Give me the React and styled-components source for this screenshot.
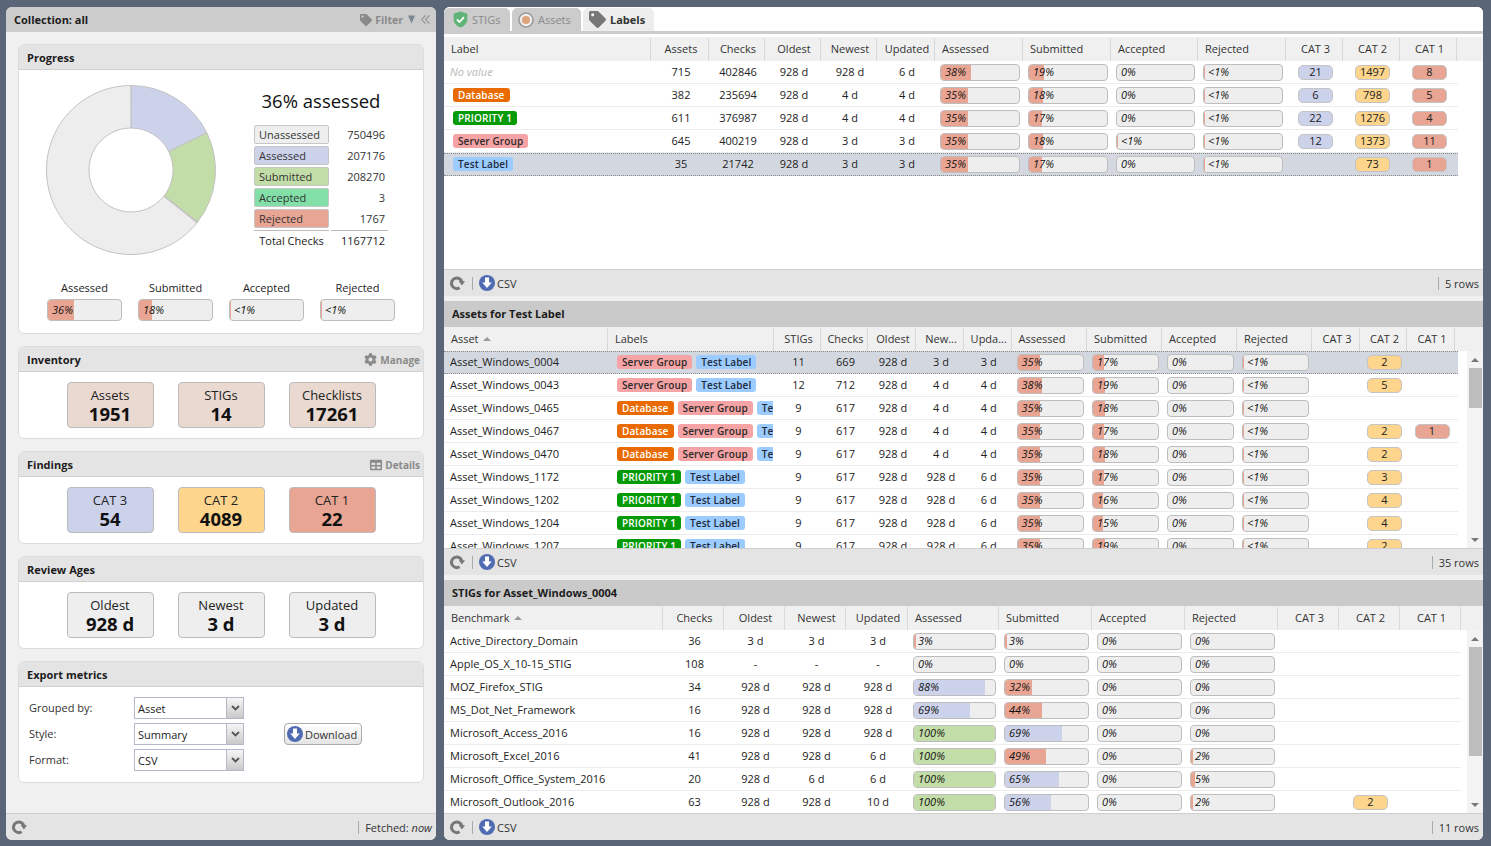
import React from 'react';
import styled, { createGlobalStyle } from 'styled-components';
import { FaTag, FaCog, FaTable } from 'react-icons/fa';

const GlobalStyle = createGlobalStyle`
  html, body {
    margin: 0;
    height: 100%;
    overflow: hidden;
    background: #5a6677;
    font-family: "Open Sans", "Liberation Sans", sans-serif;
    font-size: 11px;
    color: #1c1c1c;
  }
  * { box-sizing: border-box; }
`;

const fills = { low: '#e9a594', mid: '#cdd2eb', full: '#c3dda8' };

const Page = styled.div`
  display: flex;
  gap: 8px;
  width: 1491px;
  height: 846px;
  padding: 7px 8px 6px 6px;
`;

const LeftPanel = styled.aside`
  width: 430px;
  display: flex;
  flex-direction: column;
  background: #f0f0f0;
  border-radius: 6px;
  overflow: hidden;
`;

const LeftTitle = styled.header`
  height: 25px;
  flex: none;
  display: flex;
  align-items: center;
  padding: 0 6px 0 8px;
  background: #cccccc;
  font-weight: 700;
`;

const Grow = styled.span`
  flex: 1;
`;

const GrayAction = styled.span`
  display: flex;
  align-items: center;
  gap: 3px;
  margin-top: ${p => p.$top || 0}px;
  color: #8a8a8a;
  font-weight: 700;
  font-size: ${p => p.$size || 10}px;
`;

const ProgressBody = styled.div`
  padding: 15px 0 0 27px;
`;

const Fieldset = styled.section`
  height: ${p => p.$h}px;
  flex: none;
  display: flex;
  flex-direction: column;
  background: #fff;
  border: 1px solid #dcdcdc;
  border-radius: 6px;
  overflow: hidden;
`;

const FieldsetTitle = styled.div`
  height: 25px;
  flex: none;
  display: flex;
  align-items: center;
  padding: 0 3px 0 8px;
  background: #e4e4e4;
  border-bottom: 1px solid #d0d0d0;
  font-weight: 700;
`;

const LeftBody = styled.div`
  flex: 1;
  display: flex;
  flex-direction: column;
  gap: 12px;
  padding: 12px 12px 0;
`;

const ProgressTop = styled.div`
  display: flex;
  gap: 38px;
`;

const LegendBox = styled.div`
  width: 134px;
  padding-top: 4px;
`;

const Heading = styled.div`
  font-size: 18.500px;
  line-height: 24px;
  text-align: center;
  white-space: nowrap;
  margin-bottom: 12px;
  color: #111;
`;

const LegendGrid = styled.div`
  display: grid;
  grid-template-columns: 75px 57px;
  column-gap: 2px;
  row-gap: 2px;
`;

const LegendItem = styled.div`
  height: 19px;
  line-height: 18px;
  padding-left: 4px;
  background: ${p => p.$bg};
  border: 1px solid #c6c6c6;
  border-radius: 2px;
  color: #333;
`;

const LegendValue = styled.div`
  line-height: 19px;
  text-align: right;
  padding-right: 3px;
  color: #333;
`;

const TotalLabel = styled.div`
  border-top: 1px solid #bbb;
  height: 22px;
  line-height: 20px;
  text-align: center;
  white-space: nowrap;
`;

const TotalValue = styled(TotalLabel)`
  text-align: right;
  padding-right: 3px;
`;

const MiniBars = styled.div`
  display: grid;
  grid-template-columns: repeat(4, 75px);
  column-gap: 16px;
  margin: 25px 0 0 1px;
`;

const MiniLabel = styled.div`
  line-height: 15px;
  margin-bottom: 4px;
  text-align: center;
  font-size: 11px;
`;

const BarWrap = styled.div`
  position: relative;
  height: ${p => p.$h || 17}px;
  background: #eeeeee;
  border: 1px solid #bdbdbd;
  border-radius: 4px;
  overflow: hidden;
`;

const BarFill = styled.div`
  height: 100%;
  background: ${p => fills[p.$kind]};
`;

const BarText = styled.span`
  position: absolute;
  top: 0;
  bottom: 1px;
  left: 4px;
  display: flex;
  align-items: center;
  font-style: italic;
  color: #111;
`;

const TileRow = styled.div`
  flex: 1;
  display: flex;
  justify-content: center;
  align-items: center;
  gap: 24px;
`;

const Tile = styled.div`
  width: 87px;
  height: 46px;
  padding-top: 1px;
  display: flex;
  flex-direction: column;
  align-items: center;
  justify-content: center;
  background: ${p => p.$bg};
  border: 1px solid #bbb;
  border-radius: 4px;
`;

const TileLabel = styled.div`
  font-size: 13px;
  line-height: 17px;
  color: #222;
`;

const TileValue = styled.div`
  font-size: 18.500px;
  line-height: 20px;
  font-weight: 700;
  color: #111;
`;

const ExportBody = styled.div`
  flex: 1;
  display: flex;
  align-items: flex-start;
  padding: 10px 10px 0;
`;

const ExportForm = styled.div`
  display: grid;
  grid-template-columns: 105px 110px;
  row-gap: 4px;
  align-items: center;
`;

const ExportLabel = styled.div`
  margin-top: -1px;
  color: #333;
`;

const Select = styled.div`
  height: 22px;
  display: flex;
  background: #fff;
  border: 1px solid #b5b8c8;
`;

const SelectValue = styled.div`
  flex: 1;
  padding-left: 3px;
  line-height: 22px;
`;

const SelectTrigger = styled.div`
  width: 17px;
  display: flex;
  align-items: center;
  justify-content: center;
  background: linear-gradient(#f6f6f6, #c9c9c9);
  border-left: 1px solid #b5b8c8;
`;

const DownloadButton = styled.div`
  width: 78px;
  height: 22px;
  margin: 26px 0 0 40px;
  display: flex;
  align-items: center;
  gap: 2px;
  padding-left: 2px;
  background: linear-gradient(#ffffff, #e4e4e4);
  border: 1px solid #aaa;
  border-radius: 4px;
  color: #333;
`;

const Footer = styled.footer`
  height: 27px;
  flex: none;
  display: flex;
  align-items: center;
  padding: 0 4px 0 5px;
  background: #e4e4e4;
  border-top: 1px solid #cfcfcf;
  color: #333;
`;

const Divider = styled.span`
  width: 1px;
  height: 13px;
  background: #aaa;
  margin: 0 6px 0 7px;
`;

const CsvText = styled.span`
  margin-left: 2px;
`;

const RightColumn = styled.main`
  flex: 1;
  display: flex;
  flex-direction: column;
  gap: 5px;
  background: #f0f0f0;
  border-radius: 6px;
  overflow: hidden;
`;

const GridPanel = styled.div`
  height: ${p => (p.$h ? `${p.$h}px` : 'auto')};
  flex: ${p => (p.$h ? 'none' : 1)};
  min-height: 0;
  display: flex;
  flex-direction: column;
  background: #fff;
`;

const TabStrip = styled.div`
  height: 27px;
  flex: none;
  display: flex;
  gap: 2px;
  padding-top: 1px;
  background: #fff;
  border-bottom: 3px solid #cccccc;
  margin-bottom: 3px;
`;

const Tab = styled.div`
  width: ${p => p.$w}px;
  height: 23px;
  display: flex;
  align-items: center;
  gap: 4px;
  padding-left: ${p => p.$pl}px;
  background: ${p => (p.$active ? '#ededed' : '#cccccc')};
  border-radius: 5px 5px 0 0;
  color: ${p => (p.$active ? '#333' : '#8a8a8a')};
  font-weight: ${p => (p.$active ? 700 : 400)};
`;

const PanelTitle = styled.div`
  height: 26px;
  flex: none;
  display: flex;
  align-items: center;
  padding: 0 0 2px 8px;
  background: #cacaca;
  font-weight: 700;
`;

const HeaderRow = styled.div`
  height: 24px;
  flex: none;
  display: grid;
  grid-template-columns: ${p => p.$cols};
  background: #f0f0f0;
`;

const HeaderCell = styled.div`
  display: flex;
  align-items: center;
  justify-content: ${p => (p.$center ? 'center' : 'flex-start')};
  gap: 4px;
  padding: 0 ${p => (p.$center ? 0 : 6)}px 2px ${p => (p.$center ? 3 : 7)}px;
  margin-top: 1px;
  border-right: 1px solid #d8d8d8;
  white-space: nowrap;
  color: #333;
`;

const SortArrow = styled.span`
  width: 0;
  height: 0;
  margin-top: 1px;
  border-left: 4px solid transparent;
  border-right: 4px solid transparent;
  border-bottom: 4px solid #999;
`;

const GridBody = styled.div`
  flex: 1;
  min-height: 0;
  display: flex;
  justify-content: space-between;
  background: #fff;
`;

const Rows = styled.div`
  width: ${p => p.$w}px;
  overflow: hidden;
`;

const Row = styled.div`
  height: 23px;
  display: grid;
  grid-template-columns: ${p => p.$cols};
  align-items: center;
  padding-bottom: ${p => (p.$selected ? 1 : 0)}px;
  background: ${p => (p.$selected ? '#d3d8e0' : '#fff')};
  border-top: ${p => (p.$selected ? '1px dotted #888' : 'none')};
  border-bottom: 1px ${p => (p.$selected ? 'dotted #888' : 'solid #ececec')};
`;

const TextCell = styled.div`
  padding: 0 0 2px 6px;
  white-space: nowrap;
  overflow: hidden;
  color: #222;
`;

const NoValue = styled(TextCell)`
  font-style: italic;
  color: #b9b9b9;
`;

const NumCell = styled.div`
  padding: 0 0 2px 2px;
  text-align: center;
  white-space: nowrap;
  color: #222;
`;

const BarCell = styled.div`
  padding: 0 3px 0 5px;
`;

const ChipCell = styled.div`
  display: flex;
  gap: 4px;
  padding-left: ${p => p.$pad}px;
  overflow: hidden;
  margin-right: 1px;
`;

const Chip = styled.span`
  flex: none;
  height: 14px;
  line-height: 14px;
  padding: 0 5px;
  border-radius: 3px;
  font-size: 10px;
  font-weight: 600;
  letter-spacing: 0.12px;
  white-space: nowrap;
  background: ${p => p.$bg};
  color: ${p => p.$fg};
`;

const CatCell = styled.div`
  padding-left: 2px;
`;

const CatBadge = styled.div`
  width: 35px;
  height: 15px;
  margin: 0 auto;
  line-height: 12px;
  text-align: center;
  background: ${p => p.$bg};
  border: 1px solid #c4c4c4;
  border-radius: 5px;
  color: #222;
`;

const Track = styled.div`
  width: 16px;
  flex: none;
  display: flex;
  flex-direction: column;
  align-items: center;
  background: #f3f3f3;
`;

const TrackArrow = styled.div`
  height: 17px;
  flex: none;
  display: flex;
  align-items: center;
  justify-content: center;
  &::after {
    content: "";
    border-left: 4px solid transparent;
    border-right: 4px solid transparent;
    border-${p => (p.$down ? 'top' : 'bottom')}: 4px solid #777;
  }
`;

const Thumb = styled.div`
  width: 13px;
  height: ${p => p.$h}px;
  flex: none;
  background: #bdbdbd;
`;

const chipStyles = {
  DB: { text: 'Database', bg: '#e86a00', fg: '#fff' },
  P1: { text: 'PRIORITY 1', bg: '#079a07', fg: '#fff' },
  SG: { text: 'Server Group', bg: '#f5a3a5', fg: '#2a2a2a' },
  TL: { text: 'Test Label', bg: '#9ccbff', fg: '#1d2a3a' }
};

const catColors = ['#cdd2eb', '#fdd58c', '#e9a594'];

function RefreshIcon() {
  return (
    <svg width="16" height="16" viewBox="0 0 16 16">
      <path d="M12.900 7A5.300 5.300 0 1 0 10.600 12.800" fill="none" stroke="#777" strokeWidth="3" />
      <path d="M9.800 6.200h6.200l-3.100 4.300z" fill="#777" />
    </svg>
  );
}

function DownIcon() {
  return (
    <svg width="16" height="16" viewBox="0 0 16 16">
      <circle cx="8" cy="8" r="8" fill="#4f6cb2" />
      <path d="M6 2.600h4v5h2.800L8 13 3.200 7.600H6z" fill="#fff" />
    </svg>
  );
}

function ShieldIcon() {
  return (
    <svg width="15" height="17" viewBox="0 0 15 17">
      <path d="M7.500.5l6.800 2.200v5.500c0 4-3 6.800-6.800 8.300C3.700 15 .7 12.200.7 8.200V2.700z" fill="#5fb376" />
      <path d="M4 8.500l2.500 2.500 4.500-4.800" fill="none" stroke="#fff" strokeWidth="1.800" />
    </svg>
  );
}

function TargetIcon() {
  return (
    <svg width="16" height="16" viewBox="0 0 16 16">
      <circle cx="8" cy="8" r="7" fill="#eee" stroke="#9a9a9a" strokeWidth="1.600" />
      <circle cx="8" cy="8" r="4" fill="#dda579" />
    </svg>
  );
}

function ChevronIcon() {
  return (
    <svg width="9" height="6" viewBox="0 0 9 6">
      <path d="M1 1l3.500 3.500L8 1" fill="none" stroke="#555" strokeWidth="1.800" />
    </svg>
  );
}

function FilterArrow() {
  return (
    <svg width="7" height="9" viewBox="0 0 7 9" style={{ marginLeft: 2 }}>
      <path d="M0 .5h7L3.500 8.500z" fill="#7d8794" />
    </svg>
  );
}

function CollapseIcon() {
  return (
    <svg width="9" height="11" viewBox="0 0 10 11" style={{ marginLeft: 6 }}>
      <path d="M5 .8L.8 5.500 5 10.200M9.400.8L5.200 5.500l4.200 4.700" fill="none" stroke="#8f8f8f" strokeWidth="1.200" />
    </svg>
  );
}

function polar(r, deg) {
  const a = ((deg - 90) * Math.PI) / 180;
  return [85 + r * Math.cos(a), 85 + r * Math.sin(a)];
}

function slice(from, to) {
  const [ax, ay] = polar(84.500, from);
  const [bx, by] = polar(84.500, to);
  const [cx, cy] = polar(42, to);
  const [dx, dy] = polar(42, from);
  const large = to - from > 180 ? 1 : 0;
  return `M${ax} ${ay}A84.500 84.500 0 ${large} 1 ${bx} ${by}L${cx} ${cy}A42 42 0 ${large} 0 ${dx} ${dy}Z`;
}

function Donut() {
  const parts = [
    { from: 0, to: 63.900, fill: '#cdd2eb' },
    { from: 63.900, to: 128.100, fill: '#c3dda8' },
    { from: 128.100, to: 128.700, fill: '#e9a594' },
    { from: 128.700, to: 359.900, fill: '#ededed' }
  ];
  return (
    <svg width="170" height="170" viewBox="0 0 170 170">
      {parts.map(p => (
        <path key={p.from} d={slice(p.from, p.to)} fill={p.fill} stroke="#c2c2c2" strokeWidth="1" />
      ))}
    </svg>
  );
}

function kindFor(pct) {
  if (pct >= 100) return 'full';
  if (pct >= 50) return 'mid';
  return 'low';
}

// v is the percent as text: "35", "<1" or "0"
function Bar({ v, h }) {
  const pct = v === '<1' ? 1 : Number(v);
  return (
    <BarWrap $h={h}>
      <BarFill $kind={kindFor(pct)} style={{ width: `${pct}%` }} />
      <BarText>{v}%</BarText>
    </BarWrap>
  );
}

function Tiles({ items, bg }) {
  return (
    <TileRow>
      {items.map(t => (
        <Tile key={t.label} $bg={t.bg || bg}>
          <TileLabel>{t.label}</TileLabel>
          <TileValue>{t.value}</TileValue>
        </Tile>
      ))}
    </TileRow>
  );
}

function Scrollbar({ thumb }) {
  return (
    <Track>
      <TrackArrow />
      <Thumb $h={thumb} />
      <Grow />
      <TrackArrow $down />
    </Track>
  );
}

function GridFooter({ rows }) {
  return (
    <Footer>
      <RefreshIcon />
      <Divider />
      <DownIcon />
      <CsvText>CSV</CsvText>
      <Grow />
      <Divider />
      <span>{rows} rows</span>
    </Footer>
  );
}

function Cats({ cats }) {
  return cats.map((c, i) => (
    <CatCell key={i}>{c !== '' && <CatBadge $bg={catColors[i]}>{c}</CatBadge>}</CatCell>
  ));
}

function GridHeader({ cols, first, sorted, labels, center }) {
  const left = ['Assessed', 'Submitted', 'Accepted', 'Rejected'];
  const cats = ['CAT 3', 'CAT 2', 'CAT 1'];
  return (
    <HeaderRow $cols={cols}>
      <HeaderCell>
        {first}
        {sorted && <SortArrow />}
      </HeaderCell>
      {labels && <HeaderCell>Labels</HeaderCell>}
      {center.map(t => <HeaderCell key={t} $center>{t}</HeaderCell>)}
      {left.map(t => <HeaderCell key={t}>{t}</HeaderCell>)}
      {cats.map(t => <HeaderCell key={t} $center>{t}</HeaderCell>)}
    </HeaderRow>
  );
}

const labelCols = '207px 58px 56px 56px 56px 58px 88px 88px 87px 88px 57px 57px 57px';
const labelRows = [
  { chip: null, n: ['715', '402846', '928 d', '928 d', '6 d'], b: ['38', '19', '0', '<1'], c: ['21', '1497', '8'] },
  { chip: 'DB', n: ['382', '235694', '928 d', '4 d', '4 d'], b: ['35', '18', '0', '<1'], c: ['6', '798', '5'] },
  { chip: 'P1', n: ['611', '376987', '928 d', '4 d', '4 d'], b: ['35', '17', '0', '<1'], c: ['22', '1276', '4'] },
  { chip: 'SG', n: ['645', '400219', '928 d', '3 d', '3 d'], b: ['35', '18', '<1', '<1'], c: ['12', '1373', '11'] },
  { chip: 'TL', n: ['35', '21742', '928 d', '3 d', '3 d'], b: ['35', '17', '0', '<1'], c: ['', '73', '1'], selected: true }
];

const assetCols = '164px 166px 47px 47px 48px 48px 47.500px 75.500px 75px 75px 75px 48px 47px 48px';
const assetRows = [
  { name: 'Asset_Windows_0004', chips: ['SG', 'TL'], n: ['11', '669', '928 d', '3 d', '3 d'], b: ['35', '17', '0', '<1'], c: ['', '2', ''], selected: true },
  { name: 'Asset_Windows_0043', chips: ['SG', 'TL'], n: ['12', '712', '928 d', '4 d', '4 d'], b: ['38', '19', '0', '<1'], c: ['', '5', ''] },
  { name: 'Asset_Windows_0465', chips: ['DB', 'SG', 'TL'], n: ['9', '617', '928 d', '4 d', '4 d'], b: ['35', '18', '0', '<1'], c: ['', '', ''] },
  { name: 'Asset_Windows_0467', chips: ['DB', 'SG', 'TL'], n: ['9', '617', '928 d', '4 d', '4 d'], b: ['35', '17', '0', '<1'], c: ['', '2', '1'] },
  { name: 'Asset_Windows_0470', chips: ['DB', 'SG', 'TL'], n: ['9', '617', '928 d', '4 d', '4 d'], b: ['35', '18', '0', '<1'], c: ['', '2', ''] },
  { name: 'Asset_Windows_1172', chips: ['P1', 'TL'], n: ['9', '617', '928 d', '928 d', '6 d'], b: ['35', '17', '0', '<1'], c: ['', '3', ''] },
  { name: 'Asset_Windows_1202', chips: ['P1', 'TL'], n: ['9', '617', '928 d', '928 d', '6 d'], b: ['35', '16', '0', '<1'], c: ['', '4', ''] },
  { name: 'Asset_Windows_1204', chips: ['P1', 'TL'], n: ['9', '617', '928 d', '928 d', '6 d'], b: ['35', '15', '0', '<1'], c: ['', '4', ''] },
  { name: 'Asset_Windows_1207', chips: ['P1', 'TL'], n: ['9', '617', '928 d', '928 d', '6 d'], b: ['35', '19', '0', '<1'], c: ['', '2', ''] }
];

const stigCols = '219px 61px 61px 61px 62px 91px 93px 93px 93px 61px 61px 61px';
const stigRows = [
  { name: 'Active_Directory_Domain', n: ['36', '3 d', '3 d', '3 d'], b: ['3', '3', '0', '0'], c: ['', '', ''] },
  { name: 'Apple_OS_X_10-15_STIG', n: ['108', '-', '-', '-'], b: ['0', '0', '0', '0'], c: ['', '', ''] },
  { name: 'MOZ_Firefox_STIG', n: ['34', '928 d', '928 d', '928 d'], b: ['88', '32', '0', '0'], c: ['', '', ''] },
  { name: 'MS_Dot_Net_Framework', n: ['16', '928 d', '928 d', '928 d'], b: ['69', '44', '0', '0'], c: ['', '', ''] },
  { name: 'Microsoft_Access_2016', n: ['16', '928 d', '928 d', '928 d'], b: ['100', '69', '0', '0'], c: ['', '', ''] },
  { name: 'Microsoft_Excel_2016', n: ['41', '928 d', '928 d', '6 d'], b: ['100', '49', '0', '2'], c: ['', '', ''] },
  { name: 'Microsoft_Office_System_2016', n: ['20', '928 d', '6 d', '6 d'], b: ['100', '65', '0', '5'], c: ['', '', ''] },
  { name: 'Microsoft_Outlook_2016', n: ['63', '928 d', '928 d', '10 d'], b: ['100', '56', '0', '2'], c: ['', '2', ''] }
];

function DataRow({ cols, row, first }) {
  return (
    <Row $cols={cols} $selected={row.selected}>
      {first}
      {row.n.map((v, i) => <NumCell key={i}>{v}</NumCell>)}
      {row.b.map((v, i) => <BarCell key={i}><Bar v={v} /></BarCell>)}
      <Cats cats={row.c} />
    </Row>
  );
}

function Chips({ names, pad }) {
  return (
    <ChipCell $pad={pad}>
      {names.map(n => (
        <Chip key={n} $bg={chipStyles[n].bg} $fg={chipStyles[n].fg}>{chipStyles[n].text}</Chip>
      ))}
    </ChipCell>
  );
}

function LeftSide() {
  const legend = [
    ['Unassessed', '750496', '#eeeeee'],
    ['Assessed', '207176', '#cdd2eb'],
    ['Submitted', '208270', '#c3dda8'],
    ['Accepted', '3', '#82dfa8'],
    ['Rejected', '1767', '#e9a594']
  ];
  const minis = [['Assessed', '36'], ['Submitted', '18'], ['Accepted', '<1'], ['Rejected', '<1']];
  return (
    <LeftPanel>
      <LeftTitle>
        Collection: all
        <Grow />
        <GrayAction $size={10.500}><FaTag size={12} />Filter<FilterArrow /></GrayAction>
        <CollapseIcon />
      </LeftTitle>
      <LeftBody>
        <Fieldset $h={290}>
          <FieldsetTitle>Progress</FieldsetTitle>
          <ProgressBody>
            <ProgressTop>
              <Donut />
              <LegendBox>
                <Heading>36% assessed</Heading>
                <LegendGrid>
                  {legend.map(([name, value, bg]) => (
                    <React.Fragment key={name}>
                      <LegendItem $bg={bg}>{name}</LegendItem>
                      <LegendValue>{value}</LegendValue>
                    </React.Fragment>
                  ))}
                  <TotalLabel>Total Checks</TotalLabel>
                  <TotalValue>1167712</TotalValue>
                </LegendGrid>
              </LegendBox>
            </ProgressTop>
            <MiniBars>
              {minis.map(([name, v]) => (
                <div key={name}>
                  <MiniLabel>{name}</MiniLabel>
                  <Bar v={v} h={22} />
                </div>
              ))}
            </MiniBars>
          </ProgressBody>
        </Fieldset>

        <Fieldset $h={93}>
          <FieldsetTitle>
            Inventory
            <Grow />
            <GrayAction $top={1}><FaCog size={13} />Manage</GrayAction>
          </FieldsetTitle>
          <Tiles
            bg="#e9d9d1"
            items={[
              { label: 'Assets', value: '1951' },
              { label: 'STIGs', value: '14' },
              { label: 'Checklists', value: '17261' }
            ]}
          />
        </Fieldset>

        <Fieldset $h={93}>
          <FieldsetTitle>
            Findings
            <Grow />
            <GrayAction $top={1}><FaTable size={12} />Details</GrayAction>
          </FieldsetTitle>
          <Tiles
            items={[
              { label: 'CAT 3', value: '54', bg: catColors[0] },
              { label: 'CAT 2', value: '4089', bg: catColors[1] },
              { label: 'CAT 1', value: '22', bg: catColors[2] }
            ]}
          />
        </Fieldset>

        <Fieldset $h={93}>
          <FieldsetTitle>Review Ages</FieldsetTitle>
          <Tiles
            bg="#eeeeee"
            items={[
              { label: 'Oldest', value: '928 d' },
              { label: 'Newest', value: '3 d' },
              { label: 'Updated', value: '3 d' }
            ]}
          />
        </Fieldset>

        <Fieldset $h={122}>
          <FieldsetTitle>Export metrics</FieldsetTitle>
          <ExportBody>
            <ExportForm>
              {[['Grouped by:', 'Asset'], ['Style:', 'Summary'], ['Format:', 'CSV']].map(([label, value]) => (
                <React.Fragment key={label}>
                  <ExportLabel>{label}</ExportLabel>
                  <Select>
                    <SelectValue>{value}</SelectValue>
                    <SelectTrigger><ChevronIcon /></SelectTrigger>
                  </Select>
                </React.Fragment>
              ))}
            </ExportForm>
            <DownloadButton><DownIcon />Download</DownloadButton>
          </ExportBody>
        </Fieldset>
      </LeftBody>
      <Footer>
        <RefreshIcon />
        <Grow />
        <Divider />
        <span>Fetched: <i>now</i></span>
      </Footer>
    </LeftPanel>
  );
}

export default function App() {
  return (
    <>
      <GlobalStyle />
      <Page>
        <LeftSide />
        <RightColumn>
          <GridPanel $h={289}>
            <TabStrip>
              <Tab $w={66} $pl={9}><ShieldIcon />STIGs</Tab>
              <Tab $w={69} $pl={6}><TargetIcon />Assets</Tab>
              <Tab $w={71} $pl={6} $active><FaTag size={17} color="#777" />Labels</Tab>
            </TabStrip>
            <GridHeader
              cols={labelCols}
              first="Label"
              center={['Assets', 'Checks', 'Oldest', 'Newest', 'Updated']}
            />
            <GridBody>
              <Rows $w={1014}>
                {labelRows.map((row, i) => (
                  <DataRow
                    key={i}
                    cols={labelCols}
                    row={row}
                    first={row.chip ? <Chips names={[row.chip]} pad={9} /> : <NoValue>No value</NoValue>}
                  />
                ))}
              </Rows>
            </GridBody>
            <GridFooter rows={5} />
          </GridPanel>

          <GridPanel $h={274}>
            <PanelTitle>Assets for Test Label</PanelTitle>
            <GridHeader
              cols={assetCols}
              first="Asset"
              sorted
              labels
              center={['STIGs', 'Checks', 'Oldest', 'New...', 'Upda...']}
            />
            <GridBody>
              <Rows $w={1014}>
                {assetRows.map(row => (
                  <DataRow
                    key={row.name}
                    cols={assetCols}
                    row={row}
                    first={
                      <>
                        <TextCell>{row.name}</TextCell>
                        <Chips names={row.chips} pad={9} />
                      </>
                    }
                  />
                ))}
              </Rows>
              <Scrollbar thumb={40} />
            </GridBody>
            <GridFooter rows={35} />
          </GridPanel>

          <GridPanel>
            <PanelTitle>STIGs for Asset_Windows_0004</PanelTitle>
            <GridHeader
              cols={stigCols}
              first="Benchmark"
              sorted
              center={['Checks', 'Oldest', 'Newest', 'Updated']}
            />
            <GridBody>
              <Rows $w={1017}>
                {stigRows.map(row => (
                  <DataRow
                    key={row.name}
                    cols={stigCols}
                    row={row}
                    first={<TextCell>{row.name}</TextCell>}
                  />
                ))}
              </Rows>
              <Scrollbar thumb={109} />
            </GridBody>
            <GridFooter rows={11} />
          </GridPanel>
        </RightColumn>
      </Page>
    </>
  );
}
